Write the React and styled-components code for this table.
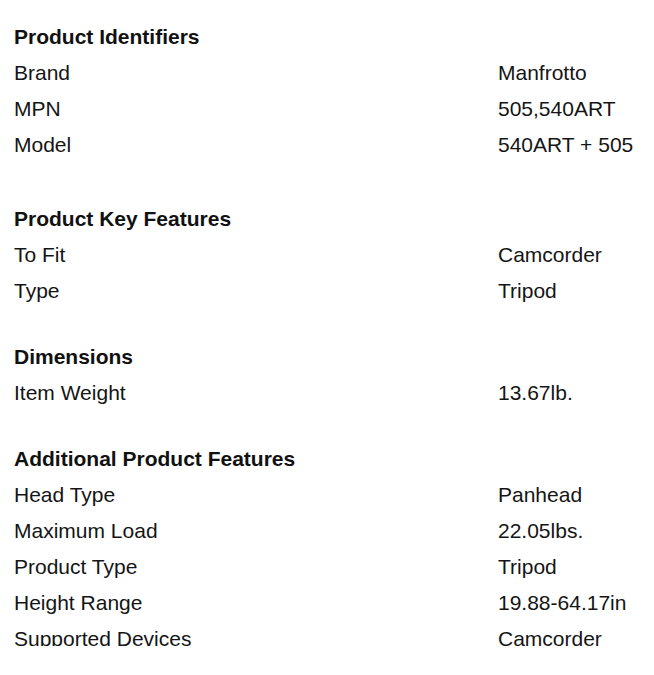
import React from "react";
import styled, { createGlobalStyle } from "styled-components";

const Global = createGlobalStyle`
  html, body { margin: 0; padding: 0; background: #fff; }
  body { font-family: "Liberation Sans", Arial, sans-serif; color: #151515; }
`;

const Page = styled.div`
  box-sizing: border-box;
  padding: 19px 0 0 14px;
  width: 640px;
  height: 646px;
  overflow: hidden;
`;

const Section = styled.section`
  margin-bottom: ${(p) => p.$gap}px;
`;

const Heading = styled.h3`
  margin: 0;
  font-size: 21px;
  font-weight: 700;
  line-height: 36px;
  color: #111;
`;

const Row = styled.div`
  display: grid;
  grid-template-columns: 484px 1fr;
  font-size: 21px;
  line-height: 36px;
`;

const Label = styled.span``;
const Value = styled.span``;

const sections = [
  {
    title: "Product Identifiers",
    gap: 38,
    rows: [
      ["Brand", "Manfrotto"],
      ["MPN", "505,540ART"],
      ["Model", "540ART + 505"],
    ],
  },
  {
    title: "Product Key Features",
    gap: 30,
    rows: [
      ["To Fit", "Camcorder"],
      ["Type", "Tripod"],
    ],
  },
  {
    title: "Dimensions",
    gap: 30,
    rows: [["Item Weight", "13.67lb."]],
  },
  {
    title: "Additional Product Features",
    gap: 0,
    rows: [
      ["Head Type", "Panhead"],
      ["Maximum Load", "22.05lbs."],
      ["Product Type", "Tripod"],
      ["Height Range", "19.88-64.17in"],
      ["Supported Devices", "Camcorder"],
    ],
  },
];

export default function App() {
  return (
    <>
      <Global />
      <Page>
        {sections.map((s) => (
          <Section key={s.title} $gap={s.gap}>
            <Heading>{s.title}</Heading>
            {s.rows.map(([l, v]) => (
              <Row key={l}>
                <Label>{l}</Label>
                <Value>{v}</Value>
              </Row>
            ))}
          </Section>
        ))}
      </Page>
    </>
  );
}
